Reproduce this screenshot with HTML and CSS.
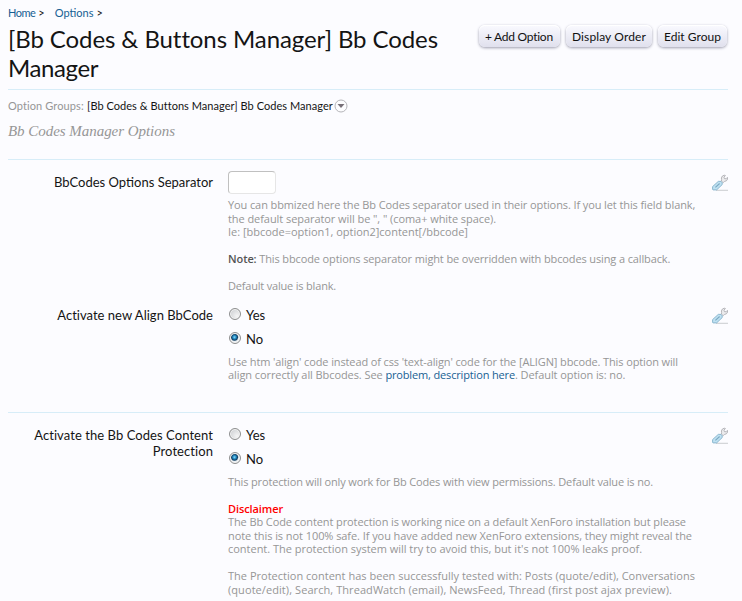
FILE: index.html
```html
<!DOCTYPE html>
<html lang="en">
<head>
<meta charset="utf-8">
<title>Bb Codes Manager Options</title>
<link rel="stylesheet" href="styles.css">
</head>
<body>
<svg class="defs" width="0" height="0"><defs>
<g id="wrench">
<path d="M5 16.3H17" stroke="#b4b7bb" stroke-width=".7"/>
<path d="M10.4 7.2 10.6 5.6 10.4 4 11.4 2 13.2 1.2 14.4 1.5 13 3.2 13.4 4.6 15 4.8 16.4 3.4 16.6 5 15.4 6.8 13.6 7.4 12.2 8.6Z" fill="#ececee" stroke="#a6a6ab" stroke-width=".8"/>
<path d="M1.6 15.5V12.6L7.3 7.4H10L11.2 8.8V10.6L5.6 15.9H2Z" fill="#bfe1f2" stroke="#82b1cb" stroke-width=".9"/>
<path d="M4.4 13.3 8.6 9.5" stroke="#7ba9c2" stroke-width="1.1"/>
</g>
</defs></svg>
<nav class="crumbs"><span><a>Home</a> <i>&gt;</i></span><span><a>Options</a> <i>&gt;</i></span></nav>
<header class="head">
<h1>[Bb Codes &amp; Buttons Manager] Bb Codes<br><span class="tight">Manager</span></h1>
<div class="buttons"><a class="b1">+ Add Option</a><a class="b2">Display Order</a><a class="b3">Edit Group</a></div>
</header>
<div class="groups"><span class="muted">Option Groups:</span><span class="current">[Bb Codes &amp; Buttons Manager] Bb Codes Manager</span><svg width="14" height="14" viewBox="0 0 14 14"><circle cx="7" cy="7" r="6" fill="#fdfdff" stroke="#b5b5b9"/><path d="M3.5 5h7L7 9Z" fill="#777078"/></svg></div>
<h2>Bb Codes Manager Options</h2>
<section class="first">
<div class="row sep">
<div class="label l1">BbCodes Options Separator</div>
<div class="ctrl">
<input type="text" class="text">
<div class="explain">
<p class="n10">You can bbmized here the Bb Codes separator used in their options. If you let this field blank,</p>
<p class="n6">the default separator will be ", " (coma+ white space).</p>
<p class="n2">Ie: [bbcode=option1, option2]content[/bbcode]</p>
<p class="gap n12"><b>Note:</b> This bbcode options separator might be overridden with bbcodes using a callback.</p>
<p class="gap n19">Default value is blank.</p>
</div></div>
<svg class="tool" width="17" height="17" fill="none"><use href="#wrench"/></svg>
</div>
<div class="row align">
<div class="label l2">Activate new Align BbCode</div>
<div class="ctrl">
<label class="opt"><span class="radio"></span>Yes</label>
<label class="opt"><span class="radio on"></span>No</label>
<div class="explain">
<p class="n12">Use htm 'align' code instead of css 'text-align' code for the [ALIGN] bbcode. This option will</p>
<p class="n8">align correctly all Bbcodes. See <a class="n17">problem, description here</a>. Default option is: no.</p>
</div></div>
<svg class="tool" width="17" height="17" fill="none"><use href="#wrench"/></svg>
</div>
</section>
<section class="second">
<div class="row protect">
<div class="label l3">Activate the Bb Codes Content<br>Protection</div>
<div class="ctrl">
<label class="opt"><span class="radio"></span>Yes</label>
<label class="opt"><span class="radio on"></span>No</label>
<div class="explain">
<p class="n14">This protection will only work for Bb Codes with view permissions. Default value is no.</p>
<p class="gap warn">Disclaimer</p>
<p class="n10">The Bb Code content protection is working nice on a default XenForo installation but please</p>
<p class="n7">note this is not 100% safe. If you have added new XenForo extensions, they might reveal the</p>
<p class="n2">content. The protection system will try to avoid this, but it's not 100% leaks proof.</p>
<p class="gap p1">The Protection content has been successfully tested with: Posts (quote/edit), Conversations</p>
<p class="p7">(quote/edit), Search, ThreadWatch (email), NewsFeed, Thread (first post ajax preview).</p>
</div></div>
<svg class="tool" width="17" height="17" fill="none"><use href="#wrench"/></svg>
</div>
</section>
</body>
</html>
```
FILE: styles.css
```css
* { box-sizing: border-box; }
html { overflow: hidden; }
body { margin: 0; padding: 6px 14px 0 8px; height: 601px; overflow: hidden; background: #fcfcff; color: #141414; font: 11px/14px "Open Sans", sans-serif; }
.defs { position: absolute; }
h1, h2, p { margin: 0; font-weight: 400; }
a { color: #176093; }
.crumbs { display: flex; gap: 10px; height: 14px; font-family: Lato, sans-serif; }
.crumbs span { display: flex; gap: 3px; }
.crumbs span:first-child a { letter-spacing: -.5px; }
.crumbs i { font-style: normal; font-size: 11px; }
.head { display: flex; justify-content: space-between; align-items: flex-start; height: 70px; padding-top: 4px; border-bottom: 1px solid #d7edf8; }
h1 { font: 24px/29px Lato, sans-serif; letter-spacing: -.09px; white-space: nowrap; }
.tight { letter-spacing: -.4px; }
.buttons { display: flex; gap: 6px; margin: 1px 1px 0 0; }
.buttons a { height: 22px; padding-left: 6px; border-radius: 6px; background: linear-gradient(#fafaff, #e0e0ed); box-shadow: 0 1px 3px #9c9cae, inset 0 1px #fff; color: #111; font: 12px/24px Lato, sans-serif; white-space: nowrap; }
.buttons .b1 { width: 81px; letter-spacing: -.26px; }
.buttons .b2 { width: 86px; letter-spacing: .11px; }
.buttons .b3 { width: 69px; letter-spacing: .03px; }
.groups { display: flex; align-items: center; height: 14px; margin-top: 9px; font-family: Lato, sans-serif; }
.muted { width: 79px; color: #969696; letter-spacing: .1px; }
.current { width: 247px; letter-spacing: .04px; white-space: nowrap; }
h2 { margin-top: 9px; height: 37px; color: #969696; font: italic 15px/18px "Liberation Serif", serif; letter-spacing: -.04px; }
.first { border-top: 1px solid #d7edf8; padding-top: 11px; height: 253px; }
.second { border-top: 1px solid #d7edf8; padding-top: 11px; }
.row { display: grid; grid-template-columns: 205px 15px 1fr 17px; }
.sep { height: 133px; }
.label { padding-top: 3px; text-align: right; font: 13px/16px Lato, sans-serif; white-space: nowrap; }
.l2 { letter-spacing: .023px; }
.l3 { letter-spacing: .068px; }
.ctrl { grid-column: 3; }
.text { display: block; width: 48px; height: 23px; margin: 0; padding: 3px; border: 1px solid #c0c0c0; border-right-color: #e6e6e6; border-bottom-color: #e6e6e6; border-radius: 4px; background: #fff; }
.tool { grid-column: 4; margin-top: 3px; }
.sep .explain { padding-top: 4px; }
.explain { color: #969696; line-height: 13.5px; white-space: nowrap; }
.explain p { height: 13.5px; }
.explain .gap { margin-top: 13.5px; }
.explain b { color: #555; font-weight: 600; letter-spacing: -.1px; }
.opt { display: flex; align-items: center; gap: 5px; height: 24px; font: 13px/16px Lato, sans-serif; }
.align .explain, .protect .explain { padding-top: 3.5px; }
.radio { width: 12px; height: 12px; margin: 0 0 2px 1px; border: 1px solid #8e8f8f; border-radius: 50%; background: radial-gradient(circle at 70% 70%, #f5f5f5, #c6c9cc); box-shadow: inset 0 0 0 1px #f4f4f4; }
.radio.on { background: radial-gradient(circle at 45% 42%, #8bdcf7 0, #248ec8 1.6px, #103e62 3px, #e9eef2 4.2px); }
.align .ctrl, .protect .ctrl { margin-top: -1px; }
.explain .warn { color: #f00; font-weight: 600; letter-spacing: -.1px; }
.n2 { letter-spacing: -.017px; }
.n6 { letter-spacing: -.064px; }
.n7 { letter-spacing: -.07px; }
.n8 { letter-spacing: -.08px; }
.n10 { letter-spacing: -.103px; }
.n12 { letter-spacing: -.122px; }
.n14 { letter-spacing: -.143px; }
.n17 { letter-spacing: -.15px; }
.n19 { letter-spacing: -.19px; }
.p1 { letter-spacing: .014px; }
.p7 { letter-spacing: .072px; }
```
